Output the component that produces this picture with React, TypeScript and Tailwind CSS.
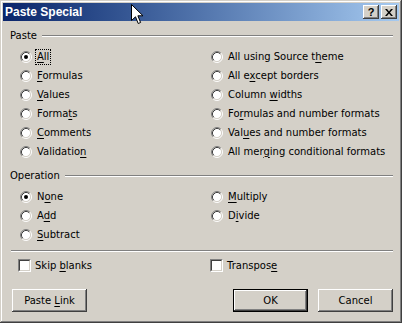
import React from 'react';

// Windows-classic Paste Special dialog

const Acc = ({ text, u }: { text: string; u: number }) => (
  <>
    {text.slice(0, u)}
    <span className="underline underline-offset-[2px]">{text.charAt(u)}</span>
    {text.slice(u + 1)}
  </>
);

const RadioDot = ({ checked }: { checked?: boolean }) => (
  <svg width="12" height="12" viewBox="0 0 12 12" className="shrink-0">
    <circle cx="6" cy="6" r="4.5" fill="#fff" />
    <path d="M2.11 9.89 A5.5 5.5 0 0 1 9.89 2.11" stroke="#808080" strokeWidth="1" fill="none" />
    <path d="M9.89 2.11 A5.5 5.5 0 0 1 2.11 9.89" stroke="#fff" strokeWidth="1" fill="none" />
    <path d="M2.82 9.18 A4.5 4.5 0 0 1 9.18 2.82" stroke="#404040" strokeWidth="1" fill="none" />
    <path d="M9.18 2.82 A4.5 4.5 0 0 1 2.82 9.18" stroke="#d4d0c8" strokeWidth="1" fill="none" />
    {checked && <circle cx="6" cy="6" r="2" fill="#000" />}
  </svg>
);

const Radio = ({ label, u, checked, focus }: { label: string; u: number; checked?: boolean; focus?: boolean }) => (
  <div className="h-[19px] flex items-center gap-[3px]">
    <RadioDot checked={checked} />
    <span className={focus ? 'border border-dotted border-black px-[1px] leading-[14px]' : 'leading-[14px] px-[2px]'}>
      <Acc text={label} u={u} />
    </span>
  </div>
);

const Check = ({ label, u }: { label: string; u: number }) => (
  <div className="h-[19px] flex items-center gap-[4px]">
    <div className="w-[13px] h-[13px] border border-t-[#808080] border-l-[#808080] border-b-white border-r-white">
      <div className="w-full h-full bg-white border border-t-[#404040] border-l-[#404040] border-b-[#d4d0c8] border-r-[#d4d0c8]" />
    </div>
    <span className="leading-[14px]">
      <Acc text={label} u={u} />
    </span>
  </div>
);

const GroupHead = ({ label }: { label: string }) => (
  <div className="h-[14px] flex items-center gap-[5px]">
    <span className="leading-[14px]">{label}</span>
    <div className="flex-1 flex flex-col">
      <div className="h-px bg-[#808080]" />
      <div className="h-px bg-white" />
    </div>
  </div>
);

const Btn = ({ children, def }: { children: React.ReactNode; def?: boolean }) => (
  <div className={`w-[75px] h-[23px] ${def ? 'border border-black' : ''}`}>
    <div className="w-full h-full flex items-center justify-center shadow-[inset_-1px_-1px_#404040,inset_1px_1px_#fff,inset_-2px_-2px_#808080]">
      {children}
    </div>
  </div>
);

export default function App() {
  return (
    <div className="w-[402px] h-[323px] bg-[#d4d0c8] relative p-[3px] flex flex-col text-[10px] text-black font-['DejaVu_Sans',Verdana,sans-serif] shadow-[inset_-1px_-1px_#404040,inset_1px_1px_#d4d0c8,inset_-2px_-2px_#808080,inset_2px_2px_#fff]">
      {/* title bar */}
      <div className="h-[18px] flex items-center bg-gradient-to-r from-[#0a246a] to-[#a6caf0] pl-[2px] pr-[2px]">
        <span className="flex-1 text-white font-bold text-[12px] leading-[18px] font-['Liberation_Sans',Arial,sans-serif]">Paste Special</span>
        <div className="flex gap-[2px]">
          <div className="w-[16px] h-[14px] flex items-center justify-center font-bold text-[11px] leading-none font-['Liberation_Sans',Arial,sans-serif] shadow-[inset_-1px_-1px_#404040,inset_1px_1px_#fff,inset_-2px_-2px_#808080] bg-[#d4d0c8]">
            ?
          </div>
          <div className="w-[16px] h-[14px] flex items-center justify-center shadow-[inset_-1px_-1px_#404040,inset_1px_1px_#fff,inset_-2px_-2px_#808080] bg-[#d4d0c8]">
            <svg width="8" height="7" viewBox="0 0 8 7">
              <path d="M0 0h2l2 2.5L6 0h2L5 3.5 8 7H6L4 4.5 2 7H0l3-3.5z" fill="#000" />
            </svg>
          </div>
        </div>
      </div>

      {/* body */}
      <div className="flex-1 flex flex-col pl-[7px] pr-[6px] pt-[8px]">
        <GroupHead label="Paste" />
        <div className="grid grid-cols-[191px_1fr] pl-[10px] mt-[4px]">
          <div className="flex flex-col">
            <Radio label="All" u={0} checked focus />
            <Radio label="Formulas" u={0} />
            <Radio label="Values" u={0} />
            <Radio label="Formats" u={5} />
            <Radio label="Comments" u={0} />
            <Radio label="Validation" u={9} />
          </div>
          <div className="flex flex-col">
            <Radio label="All using Source theme" u={18} />
            <Radio label="All except borders" u={5} />
            <Radio label="Column widths" u={7} />
            <Radio label="Formulas and number formats" u={2} />
            <Radio label="Values and number formats" u={3} />
            <Radio label="All merging conditional formats" u={7} />
          </div>
        </div>

        <div className="mt-[8px]">
          <GroupHead label="Operation" />
        </div>
        <div className="grid grid-cols-[191px_1fr] pl-[10px] mt-[4px]">
          <div className="flex flex-col">
            <Radio label="None" u={1} checked />
            <Radio label="Add" u={1} />
            <Radio label="Subtract" u={0} />
          </div>
          <div className="flex flex-col">
            <Radio label="Multiply" u={0} />
            <Radio label="Divide" u={1} />
          </div>
        </div>

        <div className="mt-[6px] ml-[1px] flex flex-col">
          <div className="h-px bg-[#808080]" />
          <div className="h-px bg-white" />
        </div>

        <div className="grid grid-cols-[192px_1fr] pl-[8px] mt-[4px]">
          <Check label="Skip blanks" u={5} />
          <Check label="Transpose" u={8} />
        </div>

        <div className="flex items-center mt-[14px] pl-[2px]">
          <Btn>
            <span>
              Paste <Acc text="Link" u={0} />
            </span>
          </Btn>
          <div className="flex-1" />
          <Btn def>OK</Btn>
          <div className="w-[10px]" />
          <Btn>Cancel</Btn>
        </div>
      </div>

      {/* mouse pointer */}
      <svg width="13" height="21" viewBox="0 0 13 21" className="absolute left-[131px] top-[4px]">
        <path d="M0.5 0.5 L0.5 16.5 L4.5 12.8 L7.2 19.5 L9.6 18.5 L6.9 11.8 L12 11.8 Z" fill="#fff" stroke="#000" strokeWidth="1" strokeLinejoin="miter" />
      </svg>
    </div>
  );
}
